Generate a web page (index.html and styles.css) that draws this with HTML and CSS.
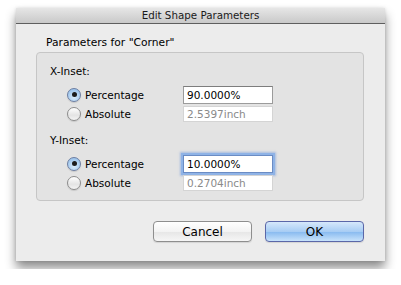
FILE: index.html
```html
<!DOCTYPE html>
<html lang="en">
<head>
    <meta charset="UTF-8">
    <title>Edit Shape Parameters</title>
    <link rel="stylesheet" href="styles.css">
</head>
<body>
    <div class="window">
        <div class="titlebar">Edit Shape Parameters</div>
        <div class="content">
            <div class="group-title">Parameters for "Corner"</div>
            <div class="group">
                <div class="section-label">X-Inset:</div>
                <div class="row">
                    <span class="radio checked"></span>
                    <span class="radio-label">Percentage</span>
                    <span class="field">90.0000%</span>
                </div>
                <div class="row">
                    <span class="radio"></span>
                    <span class="radio-label">Absolute</span>
                    <span class="field disabled">2.5397inch</span>
                </div>

                <div class="section-label second">Y-Inset:</div>
                <div class="row">
                    <span class="radio checked"></span>
                    <span class="radio-label">Percentage</span>
                    <span class="field focused">10.0000%</span>
                </div>
                <div class="row">
                    <span class="radio"></span>
                    <span class="radio-label">Absolute</span>
                    <span class="field disabled">0.2704inch</span>
                </div>
            </div>

            <div class="buttons">
                <button class="btn">Cancel</button>
                <button class="btn default">OK</button>
            </div>
        </div>
    </div>
</body>
</html>
```

FILE: styles.css
```css
* {
    margin: 0;
    padding: 0;
    box-sizing: border-box;
}

body {
    background: #ffffff;
    padding: 8px 16px;
    font-family: "DejaVu Sans", "Liberation Sans", sans-serif;
    font-size: 10.5px;
    color: #000;
}

.window {
    width: 369px;
    background: #ececec;
    box-shadow: 0 7px 10px rgba(0, 0, 0, 0.45), 0 0 3px rgba(0, 0, 0, 0.12);
}

.titlebar {
    height: 16px;
    line-height: 15px;
    text-align: center;
    font-size: 10.3px;
    color: #1a1a1a;
    background: linear-gradient(to bottom, #e6e6e6, #c9c9c9);
    border-bottom: 1px solid #5e5e5e;
}

.content {
    padding: 0 21px 19px 20px;
}

.group-title {
    padding: 11px 0 0 10px;
    line-height: 16px;
    margin-bottom: 1px;
    font-size: 10.7px;
}

.group {
    height: 149px;
    background: #e3e3e3;
    border: 1px solid #c6c6c6;
    border-radius: 4px;
    padding: 11px 13px 0 13px;
}

.section-label {
    line-height: 14px;
    margin-bottom: 7px;
}

.section-label.second {
    margin-top: 10px;
}

.row {
    display: flex;
    align-items: center;
    height: 19px;
    padding-left: 17px;
}

.radio {
    width: 14px;
    height: 14px;
    border-radius: 50%;
    border: 1px solid #8c8c8c;
    background: linear-gradient(to bottom, #ffffff, #e4e4e4 60%, #f4f4f4);
    box-shadow: 0 1px 1px rgba(0, 0, 0, 0.12);
    display: flex;
    align-items: center;
    justify-content: center;
    flex-shrink: 0;
}

.radio.checked {
    border-color: #6c7ea2;
    background: radial-gradient(circle at 50% 70%, #d8ebfb, #a9cdf0 60%, #8db8e6);
}

.radio.checked::after {
    content: "";
    width: 5px;
    height: 5px;
    border-radius: 50%;
    background: #1c1c1c;
}

.radio-label {
    width: 102px;
    padding-left: 4px;
}

.field {
    width: 90px;
    height: 18px;
    line-height: 16px;
    padding-left: 3px;
    background: #fff;
    border: 1px solid #9b9b9b;
    border-top-color: #7d7d7d;
}

.field.disabled {
    color: #8a8a8a;
    border-color: #d4d4d4;
    height: 16px;
    line-height: 14px;
}

.field.focused {
    border-color: #6b8cc4;
    box-shadow: 0 0 0 2px #8fb3e6, 0 0 2px 3px rgba(110, 150, 220, 0.5);
}

.buttons {
    display: flex;
    justify-content: flex-end;
    gap: 13px;
    margin-top: 20px;
}

.btn {
    width: 99px;
    height: 21px;
    font-family: "DejaVu Sans", "Liberation Sans", sans-serif;
    font-size: 12px;
    color: #000;
    border: 1px solid #8e8e8e;
    border-radius: 4px;
    background: linear-gradient(to bottom, #ffffff, #f3f3f3 50%, #e6e6e6 51%, #f6f6f6);
    box-shadow: 0 1px 1px rgba(0, 0, 0, 0.1);
}

.btn.default {
    border-color: #5b67a8;
    background: linear-gradient(to bottom, #d6e8fb, #a8cdf4 50%, #86b9ef 51%, #c8e3fb);
}
```
